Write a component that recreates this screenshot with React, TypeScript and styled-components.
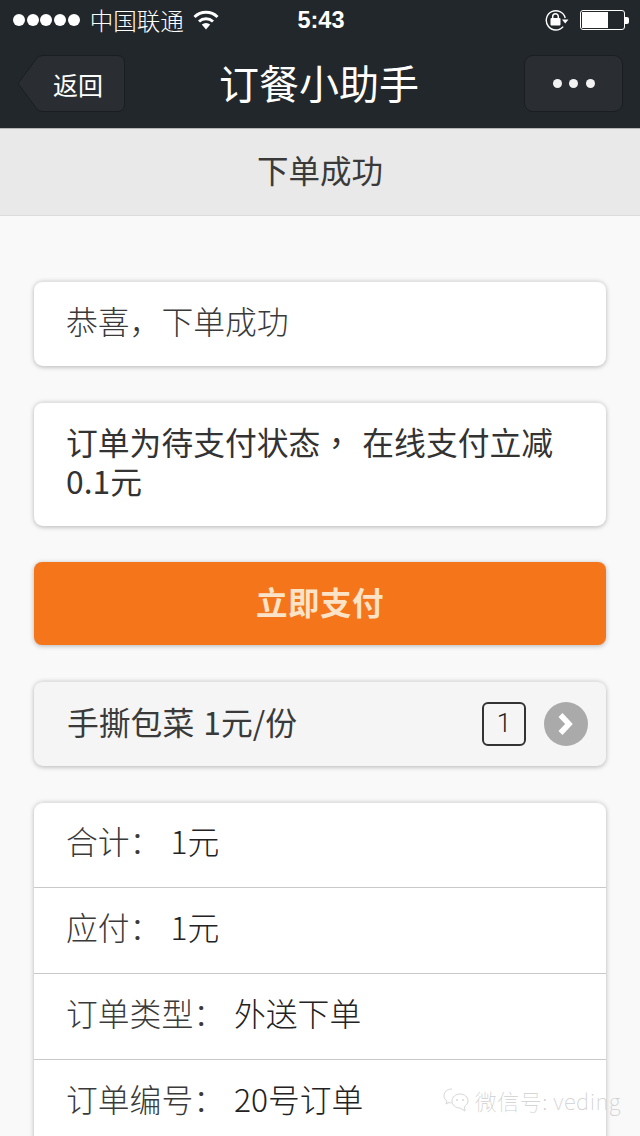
import styled, { createGlobalStyle } from "styled-components";

const GlobalStyle = createGlobalStyle`
  html, body {
    margin: 0;
    padding: 0;
    background: #f9f9f9;
  }
  body {
    font-family: "Liberation Sans", "Noto Sans CJK SC", sans-serif;
  }
`;

const totals = [
  { label: "合计：", value: "1元" },
  { label: "应付：", value: "1元" },
  { label: "订单类型：", value: "外送下单" },
  { label: "订单编号：", value: "20号订单" },
];

const App: React.FunctionComponent = () => {
  return (
    <Page>
      <GlobalStyle />
      <TopBars>
        <StatusBar>
          <StatusLeft>
            <Signal>
              {[0, 1, 2, 3, 4].map((i) => (
                <SignalDot key={i} />
              ))}
            </Signal>
            <Carrier>中国联通</Carrier>
            <svg width="26" height="20" viewBox="0 0 26 20">
              <path d="M1.5 7 A16.5 16.5 0 0 1 24.5 7" fill="none" stroke="#fff" strokeWidth="3" />
              <path d="M6 11.5 A10.5 10.5 0 0 1 20 11.5" fill="none" stroke="#fff" strokeWidth="3" />
              <path d="M13 19.5 L8.8 14.6 A6 6 0 0 1 17.2 14.6 Z" fill="#fff" />
            </svg>
          </StatusLeft>
          <Clock>5:43</Clock>
          <StatusRight>
            <svg width="24" height="22" viewBox="0 0 24 22">
              <path d="M20.2 9 A9.6 9.6 0 1 0 18.2 17.6" fill="none" stroke="#fff" strokeWidth="1.4" />
              <path d="M17 10.5 H23.5 L20.2 14.5 Z" fill="#fff" />
              <rect x="5.5" y="9" width="10" height="7.5" rx="1" fill="#fff" />
              <path d="M7.7 9.5 V7.5 A2.8 2.8 0 0 1 13.3 7.5 V9.5" fill="none" stroke="#fff" strokeWidth="1.5" />
            </svg>
            <Battery>
              <BatteryLevel />
            </Battery>
            <BatteryTip />
          </StatusRight>
        </StatusBar>
        <NavBar>
          <BackButton>
            <BackShape viewBox="0 0 108 57">
              <path
                d="M1 28.5 L20 3 Q22 0.5 26 0.5 H100 Q107.5 0.5 107.5 8 V49 Q107.5 56.5 100 56.5 H26 Q22 56.5 20 54 Z"
                fill="#2a2e33"
                stroke="#1a1d21"
              />
            </BackShape>
            <BackLabel>返回</BackLabel>
          </BackButton>
          <NavTitle>订餐小助手</NavTitle>
          <MenuButton>
            <MenuDot />
            <MenuDot />
            <MenuDot />
          </MenuButton>
        </NavBar>
      </TopBars>

      <PageHeader>下单成功</PageHeader>

      <Content>
        <Card>
          <CardText>恭喜，下单成功</CardText>
        </Card>

        <Card>
          <NoticeText>订单为待支付状态， 在线支付立减0.1元</NoticeText>
        </Card>

        <PayButton>立即支付</PayButton>

        <ItemCard>
          <ItemName>手撕包菜 1元/份</ItemName>
          <ItemActions>
            <QuantityBox>1</QuantityBox>
            <ChevronCircle>
              <svg width="22" height="28" viewBox="0 0 22 28">
                <path d="M5.500 5 L14 14 L5.500 23" fill="none" stroke="#fff" strokeWidth="5.500" />
              </svg>
            </ChevronCircle>
          </ItemActions>
        </ItemCard>

        <ListCard>
          {totals.map((row) => (
            <ListRow key={row.label}>
              <RowLabel>{row.label}</RowLabel>
              <RowValue>{row.value}</RowValue>
            </ListRow>
          ))}
        </ListCard>
      </Content>

      <Watermark>
        <svg width="26" height="24" viewBox="0 0 26 24">
          <path
            d="M9 1 C4 1 1 4 1 8 C1 10.500 2.500 12 4 13 L3 16 L6 14.500 C7 14.500 7.500 15 8.500 15"
            fill="none"
            stroke="#d6d6d6"
          />
          <path
            d="M17 6 C12.500 6 9 9 9 13 C9 17 12.500 20 17 20 L22 23 L21.500 18.500 C23.500 17 25 15.500 25 13 C25 9 21.500 6 17 6 Z"
            fill="none"
            stroke="#d6d6d6"
          />
          <circle cx="14" cy="12" r="1" fill="#d6d6d6" />
          <circle cx="20" cy="12" r="1" fill="#d6d6d6" />
        </svg>
        <WatermarkText>微信号: veding</WatermarkText>
      </Watermark>
    </Page>
  );
};

const Page = styled.div`
  position: relative;
  width: 640px;
  height: 1136px;
  overflow: hidden;
  background: #f9f9f9;
`;

const TopBars = styled.div`
  background: #22272c;
  border-bottom: 1px solid #b5b5b5;
`;

const StatusBar = styled.div`
  display: grid;
  grid-template-columns: 1fr auto 1fr;
  align-items: center;
  height: 40px;
  padding: 0 11px 0 13px;
  color: #fff;
`;

const StatusLeft = styled.div`
  display: flex;
  align-items: center;
`;

const Signal = styled.div`
  display: flex;
  gap: 1.700px;
  margin-right: 10px;
`;

const SignalDot = styled.span`
  width: 12px;
  height: 12px;
  border-radius: 50%;
  background: #fff;
`;

const Carrier = styled.span`
  font-family: "Noto Sans CJK SC", sans-serif;
  font-size: 23.500px;
  font-weight: 300;
  line-height: 40px;
  margin-right: 9px;
`;

const Clock = styled.span`
  font-size: 23.500px;
  font-weight: 700;
  line-height: 40px;
`;

const StatusRight = styled.div`
  display: flex;
  align-items: center;
  justify-content: flex-end;
`;

const Battery = styled.div`
  box-sizing: border-box;
  width: 45px;
  height: 20px;
  margin-left: 11px;
  padding: 1px;
  border: 1px solid #fff;
  border-radius: 3px;
`;

const BatteryLevel = styled.div`
  width: 26px;
  height: 100%;
  background: #fff;
`;

const BatteryTip = styled.div`
  width: 4px;
  height: 7px;
  background: #fff;
  border-radius: 0 2px 2px 0;
`;

const NavBar = styled.div`
  display: grid;
  grid-template-columns: 1fr auto 1fr;
  align-items: center;
  height: 87px;
  padding: 0 17px 1px;
`;

const BackButton = styled.div`
  position: relative;
  justify-self: start;
  display: flex;
  align-items: center;
  width: 108px;
  height: 57px;
`;

const BackShape = styled.svg`
  position: absolute;
  inset: 0;
  width: 108px;
  height: 57px;
`;

const BackLabel = styled.span`
  position: relative;
  margin-left: 36px;
  font-family: "Noto Sans CJK SC", sans-serif;
  font-size: 25px;
  color: #fff;
`;

const NavTitle = styled.h1`
  margin: 0;
  padding: 0 2px 3px 0;
  font-family: "Noto Sans CJK SC", sans-serif;
  font-size: 40px;
  font-weight: 400;
  line-height: 84px;
  color: #fff;
`;

const MenuButton = styled.div`
  justify-self: end;
  box-sizing: border-box;
  display: flex;
  align-items: center;
  justify-content: center;
  gap: 7.500px;
  width: 99px;
  height: 57px;
  background: #2a2e33;
  border: 1px solid #1a1d21;
  border-radius: 9px;
`;

const MenuDot = styled.span`
  width: 9px;
  height: 9px;
  border-radius: 50%;
  background: #f2f2f2;
`;

const PageHeader = styled.div`
  box-sizing: border-box;
  height: 87px;
  font-family: "Noto Sans CJK SC", sans-serif;
  font-size: 31.500px;
  line-height: 81px;
  text-align: center;
  color: #3a3a3a;
  background: #e9e9e9;
  border-bottom: 1px solid #dcdcdc;
`;

const Content = styled.div`
  display: flex;
  flex-direction: column;
  gap: 36px;
  padding: 65px 34px 0;
`;

const Card = styled.div`
  box-sizing: border-box;
  padding: 18px 32px 25px;
  background: #fff;
  border-top: 1px solid #e2e2e2;
  border-radius: 9px;
  box-shadow: 0 1px 5px rgba(0, 0, 0, 0.28);
`;

const CardText = styled.div`
  font-family: "Noto Sans CJK SC", sans-serif;
  font-size: 31.800px;
  font-weight: 300;
  line-height: 41px;
  color: #3a3a3a;
`;

const NoticeText = styled.div`
  margin: 1px 0;
  font-family: "Noto Sans CJK TC", "Noto Sans CJK SC", sans-serif;
  font-size: 31.800px;
  line-height: 39px;
  word-spacing: 3px;
  color: #333;
`;

const PayButton = styled.div`
  height: 83px;
  font-family: "Noto Sans CJK SC", sans-serif;
  font-size: 31.500px;
  font-weight: 700;
  line-height: 78px;
  letter-spacing: 0.5px;
  text-align: center;
  color: #fbe3c8;
  background: #f5751b;
  border-radius: 8px;
  box-shadow: 0 1px 5px rgba(0, 0, 0, 0.28);
`;

const ItemCard = styled(Card)`
  display: flex;
  align-items: center;
  justify-content: space-between;
  height: 85px;
  padding: 0 18px 0 33px;
  background: #f5f5f5;
`;

const ItemName = styled.div`
  margin-bottom: 7px;
  font-family: "Noto Sans CJK SC", sans-serif;
  font-size: 31.800px;
  word-spacing: 2px;
  color: #3a3a3a;
`;

const ItemActions = styled.div`
  display: flex;
  align-items: center;
  gap: 18px;
`;

const QuantityBox = styled.div`
  box-sizing: border-box;
  width: 44px;
  height: 44px;
  font-family: Roboto, sans-serif;
  font-size: 26px;
  font-weight: 300;
  line-height: 38px;
  text-align: center;
  color: #222;
  border: 2px solid #333;
  border-radius: 6px;
`;

const ChevronCircle = styled.div`
  display: flex;
  align-items: center;
  justify-content: center;
  width: 44px;
  height: 44px;
  background: #aaaaaa;
  border-radius: 50%;
`;

const ListCard = styled.div`
  background: #fff;
  border-radius: 9px;
  box-shadow: inset 0 1px #e2e2e2, 0 1px 5px rgba(0, 0, 0, 0.28);
`;

const ListRow = styled.div`
  box-sizing: border-box;
  display: flex;
  align-items: center;
  gap: 9px;
  height: 86px;
  padding: 0 32px 10px;
  font-family: "Noto Sans CJK SC", sans-serif;
  font-size: 31.800px;
  border-bottom: 1px solid #c9c9c9;
`;

const RowLabel = styled.span`
  font-weight: 300;
  color: #3a3a3a;
`;

const RowValue = styled.span`
  font-weight: 300;
  color: #222;
`;

const Watermark = styled.div`
  position: absolute;
  right: 19px;
  bottom: 20px;
  display: flex;
  align-items: center;
  gap: 6px;
`;

const WatermarkText = styled.span`
  font-family: "Noto Sans CJK SC", sans-serif;
  font-size: 22px;
  font-weight: 100;
  letter-spacing: 0.5px;
  color: #cfcfcf;
`;

export default App;
